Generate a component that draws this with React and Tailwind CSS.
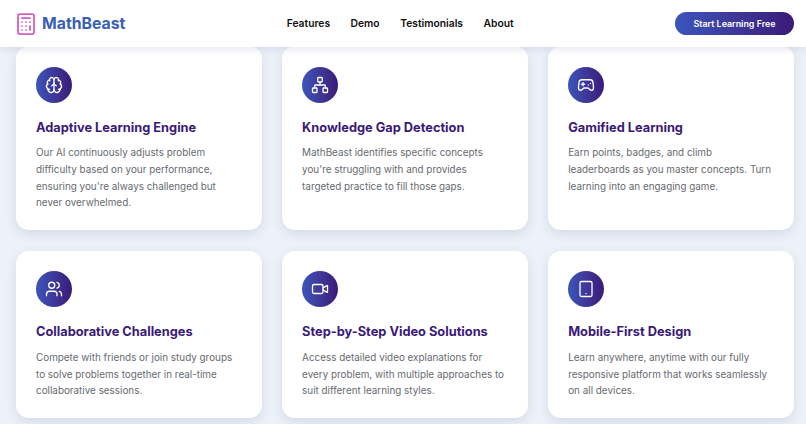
import { Brain, Calculator, Gamepad2, Network, Tablet, Users, Video } from "lucide-react";

const features = [
  {
    icon: Brain,
    title: "Adaptive Learning Engine",
    text: "Our AI continuously adjusts problem difficulty based on your performance, ensuring you're always challenged but never overwhelmed.",
  },
  {
    icon: Network,
    title: "Knowledge Gap Detection",
    text: "MathBeast identifies specific concepts you're struggling with and provides targeted practice to fill those gaps.",
  },
  {
    icon: Gamepad2,
    title: "Gamified Learning",
    text: "Earn points, badges, and climb leaderboards as you master concepts. Turn learning into an engaging game.",
  },
  {
    icon: Users,
    title: "Collaborative Challenges",
    text: "Compete with friends or join study groups to solve problems together in real-time collaborative sessions.",
  },
  {
    icon: Video,
    title: "Step-by-Step Video Solutions",
    text: "Access detailed video explanations for every problem, with multiple approaches to suit different learning styles.",
  },
  {
    icon: Tablet,
    title: "Mobile-First Design",
    text: "Learn anywhere, anytime with our fully responsive platform that works seamlessly on all devices.",
  },
];

const FeatureCard = ({ icon: Icon, title, text }) => (
  <div className="rounded-[13px] bg-white pt-[20.4px] pr-[20.5px] pb-[19px] pl-5 shadow-[0_4px_12px_rgba(30,50,90,0.12)]">
    <div className="flex h-9 w-9 items-center justify-center rounded-full bg-gradient-to-r from-[#3a55bb] to-[#3a1a78]">
      <Icon className="h-[18px] w-[18px] text-white" strokeWidth={1.75} />
    </div>
    <h3 className="mt-[13px] text-[12.8px] leading-[24px] font-bold text-[#3a1a78]">{title}</h3>
    <p className="mt-[4.5px] text-[9.9px] leading-[16.7px] text-[#666a70]">{text}</p>
  </div>
);

export default function App() {
  return (
    <div className="h-[424px] w-[806px] overflow-hidden bg-[#edf2f9] font-['Inter',sans-serif]">
      <header className="relative z-10 flex h-[47px] items-center justify-between bg-white pr-[12px] pl-[14px] shadow-[0_2px_8px_rgba(30,50,90,0.12)]">
        <div className="flex items-center gap-[4px]">
          <Calculator className="h-[24px] w-[24px] text-[#d65cc0]" strokeWidth={1.75} />
          <span className="text-[15.8px] font-bold text-[#3a5fb8]">MathBeast</span>
        </div>
        <nav className="flex items-center gap-[20.5px] text-[10.3px] font-semibold text-[#111111]">
          <span>Features</span>
          <span>Demo</span>
          <span>Testimonials</span>
          <span>About</span>
        </nav>
        <button className="h-[23px] w-[119px] rounded-full bg-gradient-to-r from-[#3a55bb] to-[#3a1a78] text-[8.9px] font-semibold text-white">
          Start Learning Free
        </button>
      </header>
      <main className="-mt-[0.7px] grid grid-cols-3 gap-x-[20.6px] gap-y-[21px] pr-[12.3px] pl-[16px]">
        {features.map((f) => (
          <FeatureCard key={f.title} {...f} />
        ))}
      </main>
    </div>
  );
}
